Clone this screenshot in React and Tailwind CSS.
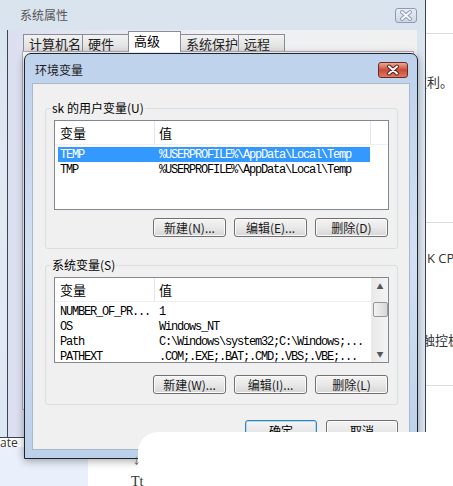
import React from 'react';

const cjk = "font-['Noto_Sans_CJK_SC','Noto_Sans',sans-serif]";
const mono = "font-['Liberation_Mono','Noto_Sans_CJK_SC',monospace]";

function XGlyph({ w, h, light }) {
  const cx = w / 2;
  const cy = h / 2;
  return (
    <svg width={w} height={h} viewBox={`0 0 ${w} ${h}`}>
      <path
        d={`M${cx - 4} ${cy - 3.5} L${cx + 4} ${cy + 3.5} M${cx + 4} ${cy - 3.5} L${cx - 4} ${cy + 3.5}`}
        stroke={light ? '#8f9cb0' : '#5a1f18'}
        strokeWidth="4"
        strokeLinecap="round"
      />
      <path
        d={`M${cx - 4} ${cy - 3.5} L${cx + 4} ${cy + 3.5} M${cx + 4} ${cy - 3.5} L${cx - 4} ${cy + 3.5}`}
        stroke={light ? '#f4f6f9' : '#ffffff'}
        strokeWidth="2"
        strokeLinecap="round"
      />
    </svg>
  );
}

function Btn({ label, primary }) {
  return (
    <div
      className={`w-[73px] h-[19px] rounded-[3px] border flex items-center justify-center text-[12px] leading-none text-[#1a1a1a] bg-gradient-to-b from-[#f4f4f4] via-[#e8e8e8] to-[#d6d6d6] ${
        primary ? 'border-[#3c7fb1] shadow-[inset_0_0_0_1px_#a9dcf6]' : 'border-[#707070] shadow-[inset_0_0_0_1px_#fbfbfb]'
      }`}
    >
      {label}
    </div>
  );
}

function Tab({ label, w, active }) {
  return (
    <div
      className={`${w} flex items-center pl-[5px] text-[13px] leading-none border border-[#898c95] border-b-0 -ml-px first:ml-0 ${
        active ? 'h-[21px] bg-white relative z-10 pb-[3px]' : 'h-[18px] bg-gradient-to-b from-[#f2f2f2] to-[#dcdcdc] text-[#222]'
      }`}
    >
      {label}
    </div>
  );
}

function ListView({ height, rows, scroll, divider }) {
  return (
    <div className={`ml-[8px] w-[335px] ${height} border border-[#828790] bg-white flex overflow-hidden`}>
      <div className="flex-1 flex flex-col min-w-0">
        <div className="h-[24px] flex items-center border-b border-[#eef0f3] text-[13px] shrink-0">
          <div className="w-[100px] h-full flex items-center pl-[5px] border-r border-[#e3e6eb]">变量</div>
          <div className={`flex-1 h-full flex items-center pl-[4px] ${divider ? 'border-r border-[#e3e6eb] mr-[17px]' : ''}`}>值</div>
        </div>
        <div className="mt-[2px] flex flex-col">
          {rows.map((r, i) => (
            <div
              key={i}
              className={`h-[15px] ml-[3px] w-[312px] flex items-center ${mono} text-[12px] tracking-[-1.2px] whitespace-nowrap overflow-hidden ${
                r.sel ? 'bg-[#3399ff] text-white' : 'text-black'
              }`}
            >
              <div className="w-[100px] pl-[2px] shrink-0">{r.name}</div>
              <div className="pl-[1px]">{r.value}</div>
            </div>
          ))}
        </div>
      </div>
      {scroll && (
        <div className="w-[17px] h-full bg-gradient-to-r from-[#e9e9e9] to-[#f4f4f4] flex flex-col items-center border-l border-[#ececec]">
          <div className="h-[16px] w-full flex items-center justify-center text-[7px] text-[#555]">▲</div>
          <div className="mt-[8px] w-[15px] h-[15px] rounded-[2px] border border-[#979797] bg-gradient-to-r from-[#f2f2f2] to-[#d8d8d8]" />
          <div className="flex-1" />
          <div className="h-[16px] w-full flex items-center justify-center text-[7px] text-[#555]">▼</div>
        </div>
      )}
    </div>
  );
}

function Group({ label, mt, children, pb }) {
  return (
    <fieldset className={`${mt} ml-[12px] w-[353px] border border-[#d5dfe5] rounded-[3px] ${pb}`}>
      <legend className={`ml-[5px] px-[1px] text-[12px] leading-[16px] ${cjk}`}>{label}</legend>
      {children}
    </fieldset>
  );
}

export default function App() {
  return (
    <div className={`relative w-[453px] h-[486px] overflow-hidden bg-white ${cjk} text-black`}>
      {/* page fragment right of the windows */}
      <div className="absolute left-[426px] top-0 w-[27px] h-[432px] overflow-hidden flex flex-col text-[13px] text-[#333] font-['Noto_Sans_CJK_SC',sans-serif]">
        <div className="mt-[33px] h-px bg-[#dcdcdc] shrink-0" />
        <div className="mt-[41px] h-[14px] flex justify-end whitespace-nowrap leading-[14px]">权利。</div>
        <div className="mt-[133px] h-px bg-[#dcdcdc] shrink-0" />
        <div className="mt-[28px] h-[14px] pl-[1px] whitespace-nowrap leading-[14px] font-['Open_Sans',sans-serif]">K CPU</div>
        <div className="mt-[68px] h-[14px] -ml-[4px] whitespace-nowrap leading-[14px]">触控板</div>
        <div className="mt-[38px] h-px bg-[#dcdcdc] shrink-0" />
      </div>

      {/* page fragment bottom left */}
      <div className="absolute left-0 top-[447px] w-[88px] h-[39px] bg-[#e9f0fb]" />
      <div className="absolute left-0 top-[436px] text-[12px] leading-[14px] text-[#333] font-['Open_Sans',sans-serif]">ate</div>

      {/* outer window: 系统属性 */}
      <div className="absolute left-0 top-0 w-[426px] h-[438px] bg-gradient-to-b from-[#d9e3ee] via-[#e2eaf4] to-[#dde6f3] border-r border-b border-[#3a4452] flex flex-col">
        <div className="h-[30px] flex items-center justify-between pl-[20px] pr-[8px] shrink-0">
          <span className="text-[12px] text-[#555] leading-none">系统属性</span>
          <div className="w-[22px] h-[15px] rounded-[3px] border border-[#8d9bb0] bg-gradient-to-b from-[#e7edf5] to-[#cdd8e6] flex items-center justify-center">
            <XGlyph w={20} h={13} light />
          </div>
        </div>
        <div className="flex-1 ml-[7px] mr-[8px] border-l border-[#3a4452] bg-gradient-to-r from-[#dcdff0] via-[#eef0f4] to-[#f0f0f0] flex flex-col pl-[14px] pt-px">
          <div className="flex items-end pl-px h-[21px] shrink-0">
            <Tab label="计算机名" w="w-[60px]" />
            <Tab label="硬件" w="w-[47px]" />
            <Tab label="高级" w="w-[53px]" active />
            <Tab label="系统保护" w="w-[59px]" />
            <Tab label="远程" w="w-[47px]" />
          </div>
          <div className="w-[392px] h-[359px] bg-white border border-[#b8a8b8] -mt-px" />
        </div>
      </div>

      {/* 环境变量 dialog */}
      <div className="absolute left-[24px] top-[53px] w-[394px] h-[406px] rounded-t-[7px] border border-[#1e2530] bg-gradient-to-b from-[#bed2ec] via-[#d2e0f2] to-[#bcd0ea] flex flex-col shadow-[0_2px_8px_rgba(0,0,0,0.35)]">
        <div className="h-[29px] pt-[3px] pl-[10px] pr-[9px] flex items-center justify-between shrink-0">
          <span className="text-[12px] leading-none text-[#1b1b1b]">环境变量</span>
          <div className="w-[30px] h-[16px] rounded-[3px] border border-[#6d2a23] bg-gradient-to-b from-[#e9a996] via-[#c84b37] to-[#dc7a63] flex items-center justify-center">
            <XGlyph w={28} h={14} />
          </div>
        </div>
        <div className="flex-1 mx-[7px] mb-[8px] border border-[#a9b8cb] bg-[#f0f0f0] flex flex-col">
          <Group label="sk 的用户变量(U)" mt="mt-[16px]" pb="pb-[11px]">
            <div className="mt-[4px]">
              <ListView
                height="h-[90px]"
                divider
                rows={[
                  { name: 'TEMP', value: '%USERPROFILE%\\AppData\\Local\\Temp', sel: true },
                  { name: 'TMP', value: '%USERPROFILE%\\AppData\\Local\\Temp' },
                ]}
              />
            </div>
            <div className="mt-[8px] pr-[9px] flex justify-end gap-[8px]">
              <Btn label="新建(N)..." />
              <Btn label="编辑(E)..." />
              <Btn label="删除(D)" />
            </div>
          </Group>

          <Group label="系统变量(S)" mt="mt-[8px]" pb="pb-[10px]">
            <div className="mt-[4px]">
              <ListView
                height="h-[86px]"
                scroll
                rows={[
                  { name: 'NUMBER_OF_PR...', value: '1' },
                  { name: 'OS', value: 'Windows_NT' },
                  { name: 'Path', value: 'C:\\Windows\\system32;C:\\Windows;...' },
                  { name: 'PATHEXT', value: '.COM;.EXE;.BAT;.CMD;.VBS;.VBE;...' },
                ]}
              />
            </div>
            <div className="mt-[12px] pr-[9px] flex justify-end gap-[8px]">
              <Btn label="新建(W)..." />
              <Btn label="编辑(I)..." />
              <Btn label="删除(L)" />
            </div>
          </Group>

          <div className="mt-[15px] ml-[212px] flex gap-[9px]">
            <div className="w-[72px] h-[22px] rounded-[3px] border border-[#3c7fb1] shadow-[inset_0_0_0_1px_#a9dcf6] bg-gradient-to-b from-[#f4f4f4] via-[#e8e8e8] to-[#d6d6d6] flex items-center justify-center text-[12px]">确定</div>
            <div className="w-[72px] h-[22px] rounded-[3px] border border-[#707070] shadow-[inset_0_0_0_1px_#fbfbfb] bg-gradient-to-b from-[#f4f4f4] via-[#e8e8e8] to-[#d6d6d6] flex items-center justify-center text-[12px]">取消</div>
          </div>
        </div>
      </div>

      {/* white card overlapping the bottom */}
      <div className="absolute left-[138px] top-[432px] right-0 bottom-0 bg-white rounded-tl-[20px]" />
      <div className="absolute left-[132px] top-[456px] text-[9px] leading-none text-[#555]">↓</div>
      <div className="absolute left-[131px] top-[475px] text-[14px] leading-none text-[#333] font-['Liberation_Serif',serif]">Tt</div>
    </div>
  );
}
